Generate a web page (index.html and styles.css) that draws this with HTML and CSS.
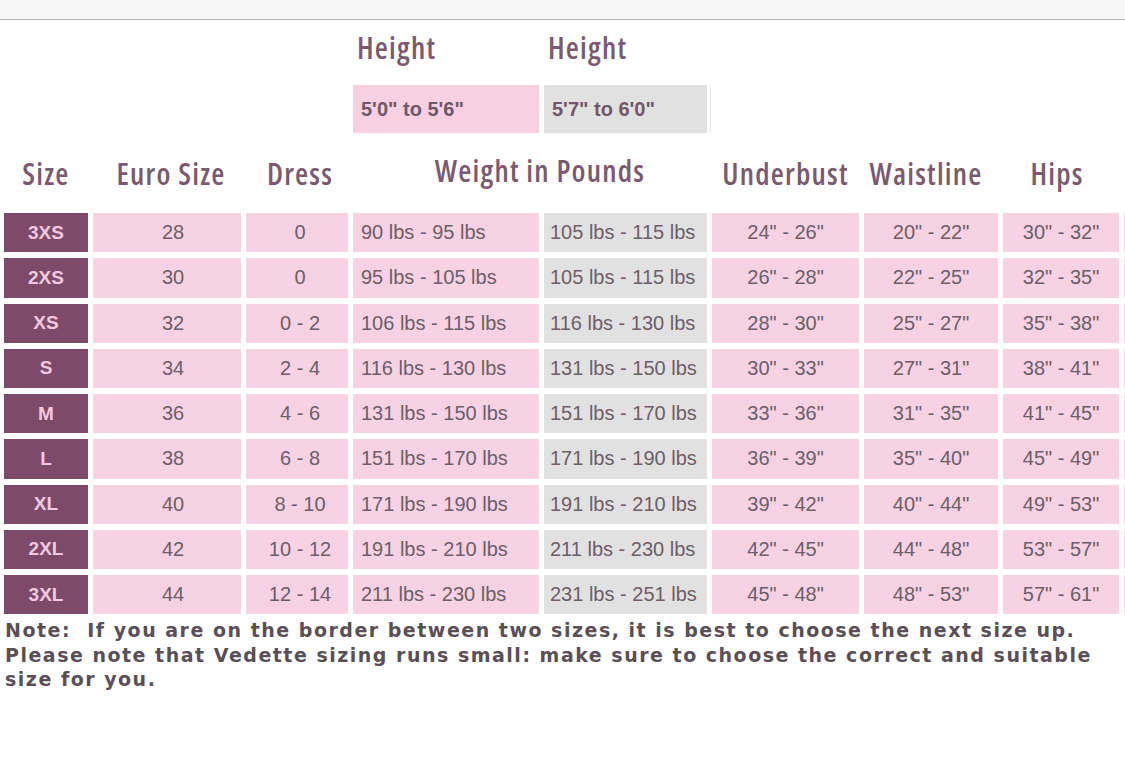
FILE: index.html
```html
<!DOCTYPE html>
<html lang="en">
<head>
<meta charset="utf-8">
<title>Size Chart</title>
<link rel="stylesheet" href="styles.css">
</head>
<body>
<div class="topbar"></div>
<main class="chart">
  <div class="grid">
    <div class="title c4">Height</div>
    <div class="title">Height</div>

    <div class="hbox pink c4">5'0" to 5'6"</div>
    <div class="hbox grey">5'7" to 6'0"</div>

    <div class="head c1">Size</div>
    <div class="head euro">Euro Size</div>
    <div class="head dress">Dress</div>
    <div class="head weight">Weight in Pounds</div>
    <div class="head">Underbust</div>
    <div class="head waist">Waistline</div>
    <div class="head hips">Hips</div>
    <div class="head"></div>

    <div class="size">3XS</div><div class="cell euro">28</div><div class="cell dress">0</div><div class="cell left">90 lbs - 95 lbs</div><div class="cell left grey">105 lbs - 115 lbs</div><div class="cell">24" - 26"</div><div class="cell">20" - 22"</div><div class="cell">30" - 32"</div><div class="cell"></div>
    <div class="size">2XS</div><div class="cell euro">30</div><div class="cell dress">0</div><div class="cell left">95 lbs - 105 lbs</div><div class="cell left grey">105 lbs - 115 lbs</div><div class="cell">26" - 28"</div><div class="cell">22" - 25"</div><div class="cell">32" - 35"</div><div class="cell"></div>
    <div class="size">XS</div><div class="cell euro">32</div><div class="cell dress">0 - 2</div><div class="cell left">106 lbs - 115 lbs</div><div class="cell left grey">116 lbs - 130 lbs</div><div class="cell">28" - 30"</div><div class="cell">25" - 27"</div><div class="cell">35" - 38"</div><div class="cell"></div>
    <div class="size">S</div><div class="cell euro">34</div><div class="cell dress">2 - 4</div><div class="cell left">116 lbs - 130 lbs</div><div class="cell left grey">131 lbs - 150 lbs</div><div class="cell">30" - 33"</div><div class="cell">27" - 31"</div><div class="cell">38" - 41"</div><div class="cell"></div>
    <div class="size">M</div><div class="cell euro">36</div><div class="cell dress">4 - 6</div><div class="cell left">131 lbs - 150 lbs</div><div class="cell left grey">151 lbs - 170 lbs</div><div class="cell">33" - 36"</div><div class="cell">31" - 35"</div><div class="cell">41" - 45"</div><div class="cell"></div>
    <div class="size">L</div><div class="cell euro">38</div><div class="cell dress">6 - 8</div><div class="cell left">151 lbs - 170 lbs</div><div class="cell left grey">171 lbs - 190 lbs</div><div class="cell">36" - 39"</div><div class="cell">35" - 40"</div><div class="cell">45" - 49"</div><div class="cell"></div>
    <div class="size">XL</div><div class="cell euro">40</div><div class="cell dress">8 - 10</div><div class="cell left">171 lbs - 190 lbs</div><div class="cell left grey">191 lbs - 210 lbs</div><div class="cell">39" - 42"</div><div class="cell">40" - 44"</div><div class="cell">49" - 53"</div><div class="cell"></div>
    <div class="size">2XL</div><div class="cell euro">42</div><div class="cell dress">10 - 12</div><div class="cell left">191 lbs - 210 lbs</div><div class="cell left grey">211 lbs - 230 lbs</div><div class="cell">42" - 45"</div><div class="cell">44" - 48"</div><div class="cell">53" - 57"</div><div class="cell"></div>
    <div class="size">3XL</div><div class="cell euro">44</div><div class="cell dress">12 - 14</div><div class="cell left">211 lbs - 230 lbs</div><div class="cell left grey">231 lbs - 251 lbs</div><div class="cell">45" - 48"</div><div class="cell">48" - 53"</div><div class="cell">57" - 61"</div><div class="cell"></div>
  </div>
  <p class="note">Note:&nbsp; If you are on the border between two sizes, it is best to choose the next size up.<br>Please note that Vedette sizing runs small: make sure to choose the correct and suitable<br>size for you.</p>
</main>
</body>
</html>
```
FILE: styles.css
```css
html, body {
  margin: 0;
  padding: 0;
  background: #ffffff;
  overflow: hidden;
}
body {
  width: 1125px;
  height: 760px;
  font-family: "Liberation Sans", Arial, sans-serif;
}
.topbar {
  height: 19px;
  background: #f6f6f6;
  border-bottom: 1px solid #b3b3b3;
}
.chart {
  padding-left: 4px;
}
.grid {
  display: grid;
  grid-template-columns: 84px 148px 102px 186px 163px 147px 134px 116px 20px;
  grid-template-rows: 59px 48px 68px repeat(9, 39.25px);
  column-gap: 5px;
  row-gap: 6px;
}
.c1 {
  grid-column: 1;
}
.c4 {
  grid-column: 4;
}
.title,
.head {
  font-family: "Open Sans", "DejaVu Sans Condensed", sans-serif;
  font-stretch: 75%;
  font-weight: 600;
  font-size: 30px;
  letter-spacing: 1.2px;
  color: #7a5a70;
}
.title {
  display: flex;
  align-items: center;
  padding-left: 4px;
  padding-bottom: 5px;
}
.hbox {
  font-family: "Liberation Sans", Arial, sans-serif;
  font-weight: bold;
  font-size: 20px;
  color: #6f5868;
  display: flex;
  align-items: center;
  padding-left: 8px;
}
.hbox.pink { background: #f7d0e2; }
.hbox.grey {
  background: #e1e1e1;
  box-shadow: 3px 0 0 #ffffff, 4px 0 0 #ececec;
}
.head {
  display: flex;
  align-items: center;
  justify-content: center;
  white-space: nowrap;
}
.head.euro {
  padding-left: 8px;
}
.head.dress {
  padding-left: 6px;
}
.head.weight {
  grid-column: span 2;
  padding-left: 20px;
  padding-bottom: 6px;
}
.head.waist {
  padding-right: 10px;
}
.head.hips {
  padding-right: 8px;
}
.size {
  background: #7e4a6a;
  color: #f3c8e0;
  font-size: 19px;
  font-weight: bold;
  display: flex;
  align-items: center;
  justify-content: center;
}
.cell {
  background: #f7d2e3;
  color: #6d5e68;
  font-size: 20px;
  display: flex;
  align-items: center;
  justify-content: center;
  white-space: nowrap;
}
.cell.euro {
  padding-left: 12px;
}
.cell.dress {
  padding-left: 6px;
}
.cell.left {
  justify-content: flex-start;
  padding-left: 8px;
}
.cell.grey {
  background: #e1e1e1;
  padding-left: 6px;
}
.note {
  margin: 4px 0 0 1px;
  font-family: "DejaVu Sans", Verdana, sans-serif;
  font-weight: bold;
  font-size: 19px;
  letter-spacing: 1.5px;
  line-height: 24.5px;
  color: #5a4f56;
  white-space: nowrap;
}
```
